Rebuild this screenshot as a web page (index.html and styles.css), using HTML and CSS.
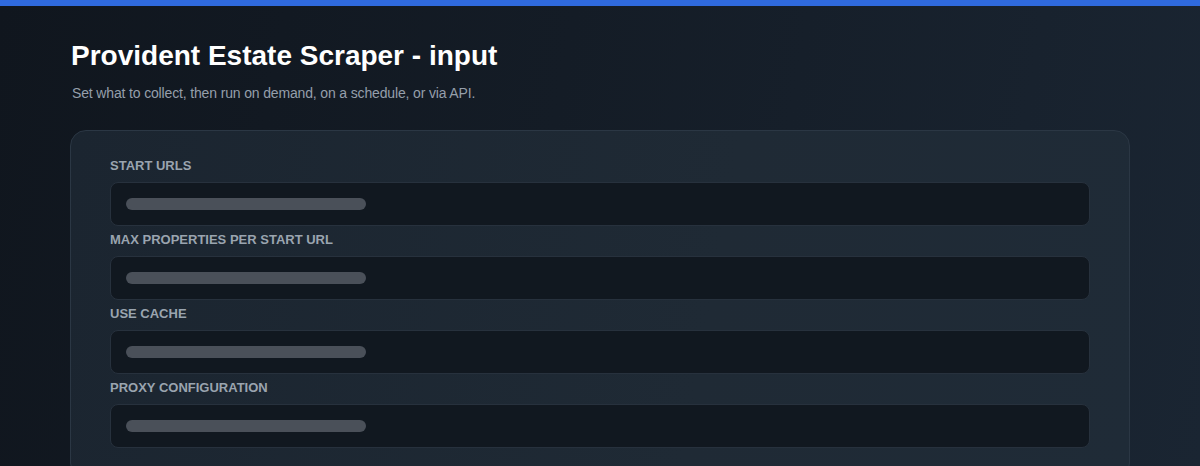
FILE: index.html
```html
<!DOCTYPE html>
<html lang="en">
<head>
<meta charset="utf-8">
<title>Provident Estate Scraper - input</title>
<link rel="stylesheet" href="styles.css">
</head>
<body>
<div class="topbar"></div>
<main class="page">
  <h1 class="title">Provident Estate Scraper - input</h1>
  <p class="subtitle">Set what to collect, then run on demand, on a schedule, or via API.</p>
  <section class="card">
    <div class="field">
      <div class="label">Start URLs</div>
      <div class="input"><span class="ph"></span></div>
    </div>
    <div class="field">
      <div class="label">Max properties per start URL</div>
      <div class="input"><span class="ph"></span></div>
    </div>
    <div class="field">
      <div class="label">Use cache</div>
      <div class="input"><span class="ph"></span></div>
    </div>
    <div class="field">
      <div class="label">Proxy configuration</div>
      <div class="input"><span class="ph"></span></div>
    </div>
  </section>
</main>
</body>
</html>
```
FILE: styles.css
```css
html, body {
  margin: 0;
  padding: 0;
  height: 100%;
}
body {
  font-family: "Liberation Sans", Arial, sans-serif;
  background: linear-gradient(100deg, #10161e 0%, #141c26 45%, #1a2532 100%);
  color: #fff;
  overflow: hidden;
}
.topbar {
  height: 6px;
  background: #2f6ade;
}
.page {
  padding: 0 70px;
}
.title {
  margin: 0;
  padding-top: 34px;
  padding-left: 1px;
  font-size: 28px;
  line-height: 32px;
  font-weight: 700;
  color: #ffffff;
}
.subtitle {
  margin: 12px 0 0 2px;
  font-size: 14px;
  line-height: 18px;
  letter-spacing: -0.15px;
  color: #959fab;
}
.card {
  margin-top: 28px;
  background: linear-gradient(100deg, #1b2530 0%, #1f2a35 60%, #1f2b37 100%);
  border: 1px solid #2b3744;
  border-radius: 16px;
  padding: 27px 39px 30px;
  display: flex;
  flex-direction: column;
  gap: 6px;
}
.field {
  display: flex;
  flex-direction: column;
  gap: 8px;
}
.label {
  font-size: 13px;
  line-height: 16px;
  font-weight: 700;
  text-transform: uppercase;
  color: #9aa4af;
}
.input {
  height: 42px;
  border: 1px solid #27313d;
  border-radius: 8px;
  background: #111820;
  display: flex;
  align-items: center;
  padding-left: 15px;
}
.ph {
  width: 240px;
  height: 12px;
  border-radius: 6px;
  background: #4a5059;
}
```
